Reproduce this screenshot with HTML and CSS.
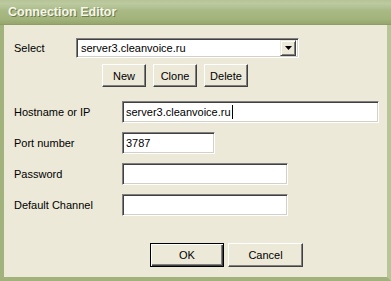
FILE: index.html
```html
<!DOCTYPE html>
<html>
<head>
<meta charset="utf-8">
<link rel="stylesheet" href="styles.css">
</head>
<body>
<div class="window">
  <div class="titlebar"><span class="title">Connection Editor</span></div>
  <div class="content">
    <div class="row select-row">
      <span class="label select-label">Select</span>
      <div class="combo">
        <span class="combo-text">server3.cleanvoice.ru</span>
        <span class="drop"><svg width="7" height="4" viewBox="0 0 7 4"><path d="M0 0H7L3.5 4Z" fill="#000"/></svg></span>
      </div>
    </div>
    <div class="btn-row">
      <button class="btn btn-small">New</button>
      <button class="btn btn-small">Clone</button>
      <button class="btn btn-small">Delete</button>
    </div>
    <div class="fields">
      <div class="row field">
        <span class="label">Hostname or IP</span>
        <div class="input w-host">server3.cleanvoice.ru<span class="caret"></span></div>
      </div>
      <div class="row field">
        <span class="label">Port number</span>
        <div class="input w-port">3787</div>
      </div>
      <div class="row field">
        <span class="label">Password</span>
        <div class="input w-mid"></div>
      </div>
      <div class="row field">
        <span class="label">Default Channel</span>
        <div class="input w-mid"></div>
      </div>
    </div>
    <div class="footer">
      <button class="btn btn-wide default">OK</button>
      <button class="btn btn-wide">Cancel</button>
    </div>
  </div>
</div>
</body>
</html>
```

FILE: styles.css
```css
html, body {
  margin: 0;
  padding: 0;
}
body {
  width: 391px;
  height: 281px;
  overflow: hidden;
  font-family: "Liberation Sans", Arial, sans-serif;
  font-size: 11px;
  color: #000;
}
.window {
  width: 391px;
  height: 281px;
  box-sizing: border-box;
  background: #ECE9D8;
  border-left: 4px solid #a2b27c;
  border-right: 4px solid #b8c596;
  border-bottom: 4px solid #a2b27c;
  display: flex;
  flex-direction: column;
}
.titlebar {
  height: 25px;
  margin-left: -4px;
  margin-right: -4px;
  box-sizing: border-box;
  background: linear-gradient(to bottom, #b6c395 0%, #bccaa0 15%, #a9b984 45%, #a2b37b 80%, #95a76d 100%);
  border-bottom: 1px solid #8d9d68;
  display: flex;
  align-items: center;
  padding-left: 8px;
}
.title {
  font-weight: bold;
  font-size: 12.5px;
  color: #f6f6ea;
  text-shadow: 1px 1px 0 #6f7d4d;
  letter-spacing: 0px;
}
.content {
  flex: 1;
  display: flex;
  flex-direction: column;
  padding-left: 10px;
}
.row {
  display: flex;
  align-items: center;
}
.label {
  display: block;
}
.select-row {
  margin-top: 13px;
  height: 20px;
}
.select-label {
  width: 62px;
}
.combo {
  width: 223px;
  height: 20px;
  box-sizing: border-box;
  background: #fff;
  border: 1px solid;
  border-color: #808080 #fff #fff #808080;
  box-shadow: inset 1px 1px 0 #404040, inset -1px -1px 0 #d4d0c8;
  display: flex;
  align-items: center;
  padding-left: 4px;
  padding-right: 2px;
}
.combo-text {
  flex: 1;
}
.drop {
  width: 16px;
  height: 16px;
  box-sizing: border-box;
  background: #ECE9D8;
  border: 1px solid;
  border-color: #ECE9D8 #404040 #404040 #ECE9D8;
  box-shadow: inset 1px 1px 0 #fff, inset -1px -1px 0 #808080;
  display: flex;
  align-items: center;
  justify-content: center;
}
.btn-row {
  display: flex;
  gap: 7px;
  margin-top: 6px;
  margin-left: 88px;
}
.btn {
  font-family: "Liberation Sans", Arial, sans-serif;
  font-size: 11px;
  color: #000;
  background: #ECE9D8;
  box-sizing: border-box;
  border: 1px solid;
  border-color: #fff #404040 #404040 #fff;
  box-shadow: inset -1px -1px 0 #808080, inset 1px 1px 0 #ECE9D8;
  padding: 0;
  margin: 0;
}
.btn-small {
  width: 44px;
  height: 23px;
}
.fields {
  display: flex;
  flex-direction: column;
  gap: 9px;
  margin-top: 14px;
}
.field {
  height: 22px;
}
.field .label {
  width: 108px;
}
.input {
  height: 22px;
  box-sizing: border-box;
  background: #fff;
  border: 1px solid;
  border-color: #808080 #fff #fff #808080;
  box-shadow: inset 1px 1px 0 #404040, inset -1px -1px 0 #d4d0c8;
  display: flex;
  align-items: center;
  padding-left: 3px;
}
.caret {
  display: inline-block;
  width: 1px;
  height: 14px;
  background: #000;
  margin-left: 1px;
}
.w-host { width: 257px; }
.w-port { width: 93px; }
.w-mid { width: 166px; }
.footer {
  display: flex;
  gap: 4px;
  margin-top: 27px;
  margin-left: 136px;
}
.btn-wide {
  width: 75px;
  height: 24px;
}
.btn.default {
  width: 74px;
  border: 1px solid #000;
  box-shadow: inset 1px 1px 0 #fff, inset -1px -1px 0 #404040, inset -2px -2px 0 #808080;
}
```
